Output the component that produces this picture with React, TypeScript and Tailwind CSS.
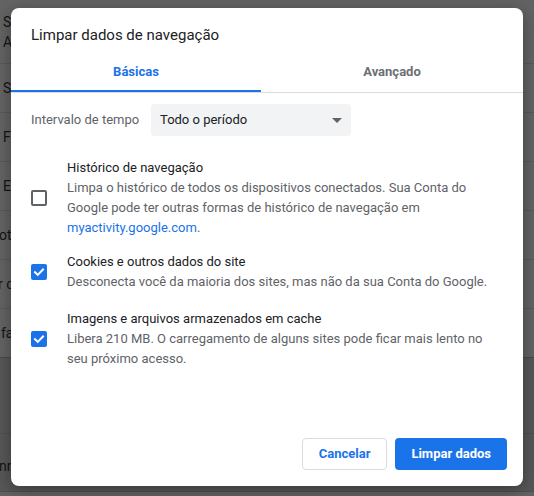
import React from 'react';

const FONT = "font-['Roboto','Liberation_Sans',sans-serif]";

const bgRows = [
  { text: 'Ferramentas', cls: 'pl-[3px]' },
  { text: 'Extensões', cls: 'pl-[3px]' },
  { text: 'otimizar', cls: '-ml-[1px]' },
  { text: 'r conteúdo', cls: '-ml-[2px]' },
  { text: 'favoritos', cls: 'pl-[1px]' },
];

const CheckBox: React.FC<{ checked: boolean }> = ({ checked }) =>
  checked ? (
    <span className="flex h-4 w-4 shrink-0 items-center justify-center rounded-[2px] bg-[#1a73e8]">
      <svg width="12" height="12" viewBox="0 0 12 12" fill="none">
        <path d="M2 6.2 L4.8 8.9 L10 3.5" stroke="white" strokeWidth="2" strokeLinecap="square" />
      </svg>
    </span>
  ) : (
    <span className="h-4 w-4 shrink-0 rounded-[2px] border-2 border-[#5f6368]" />
  );

interface OptionRowProps {
  checked: boolean;
  title: string;
  className?: string;
  children: React.ReactNode;
}

const OptionRow: React.FC<OptionRowProps> = ({ checked, title, className, children }) => (
  <div className={`flex items-center ${className ?? ''}`}>
    <CheckBox checked={checked} />
    <div className="ml-5 text-[13px] leading-[20px]">
      <div className="text-[#202124]">{title}</div>
      <div className="text-[#5f6368]">{children}</div>
    </div>
  </div>
);

export default function App() {
  return (
    <div className={`relative h-[496px] w-[534px] overflow-hidden bg-[#636363] ${FONT}`}>
      {/* dimmed settings page behind the dialog */}
      <div className="flex flex-col text-[14px] text-[#141414]">
        <div className="flex h-[64px] flex-col justify-center border-b border-[#595959] pl-[3px] leading-[20px]">
          <span>Sincronização</span>
          <span>Ajustes</span>
        </div>
        <div className="flex h-[49px] items-center border-b border-[#595959] pl-[3px]">Sites</div>
        {bgRows.map((r, i) => (
          <div
            key={i}
            className={`flex h-[49px] items-center border-b ${i === bgRows.length - 1 ? 'border-[#4a4a4a]' : 'border-[#595959]'}`}
          >
            <span className={r.cls}>{r.text}</span>
          </div>
        ))}
        <div className="h-[76px] border-b border-[#4f4f4f] bg-[#575757]" />
        <div className="flex h-[58px] items-center border-b border-[#4f4f4f] bg-[#575757] pt-[8px]">
          <span className="-ml-[1px]">nrolar</span>
        </div>
        <div className="flex-1 bg-[#575757]" />
      </div>

      {/* dialog */}
      <div className="absolute left-[11px] top-[8px] flex h-[478px] w-[512px] flex-col rounded-lg bg-white shadow-[0_4px_16px_rgba(0,0,0,0.35)]">
        <h2 className="px-5 pt-[15px] text-[15px] leading-[24px] text-[#202124]">Limpar dados de navegação</h2>

        <div className="flex border-b border-[#dadce0]">
          <div className="flex h-[45px] w-[250px] items-center justify-center border-b-2 border-[#1a73e8] pt-[6px] text-[13px] font-bold text-[#1a73e8]">
            Básicas
          </div>
          <div className="flex h-[45px] flex-1 items-center justify-center border-b-2 border-transparent pt-[6px] text-[13px] font-bold text-[#6b6f73]">
            Avançado
          </div>
        </div>

        <div className="flex-1 px-5 pt-[11px]">
          <div className="flex h-8 items-center">
            <span className="w-[120px] text-[13px] text-[#5f6368]">Intervalo de tempo</span>
            <div className="flex h-8 w-[200px] items-center justify-between rounded bg-[#f1f3f4] pl-[9px] pr-[9px] text-[13px] text-[#202124]">
              <span>Todo o período</span>
              <svg width="10" height="5" viewBox="0 0 10 5">
                <path d="M0 0 L10 0 L5 5 Z" fill="#5f6368" />
              </svg>
            </div>
          </div>

          <OptionRow checked={false} title="Histórico de navegação" className="mt-[22px]">
            Limpa o histórico de todos os dispositivos conectados. Sua Conta do
            <br />
            Google pode ter outras formas de histórico de navegação em
            <br />
            <span className="text-[#1a73e8]">myactivity.google.com</span>.
          </OptionRow>

          <OptionRow checked title="Cookies e outros dados do site" className="mt-[14px]">
            Desconecta você da maioria dos sites, mas não da sua Conta do Google.
          </OptionRow>

          <OptionRow checked title="Imagens e arquivos armazenados em cache" className="mt-[17px]">
            Libera 210 MB. O carregamento de alguns sites pode ficar mais lento no
            <br />
            seu próximo acesso.
          </OptionRow>
        </div>

        <div className="flex justify-end gap-2 px-4 pb-4">
          <button className="h-8 rounded border border-[#dadce0] bg-white px-4 text-[13px] font-bold text-[#1a73e8]">
            Cancelar
          </button>
          <button className="h-8 rounded bg-[#1a73e8] px-4 text-[13px] font-bold text-white">
            Limpar dados
          </button>
        </div>
      </div>
    </div>
  );
}
